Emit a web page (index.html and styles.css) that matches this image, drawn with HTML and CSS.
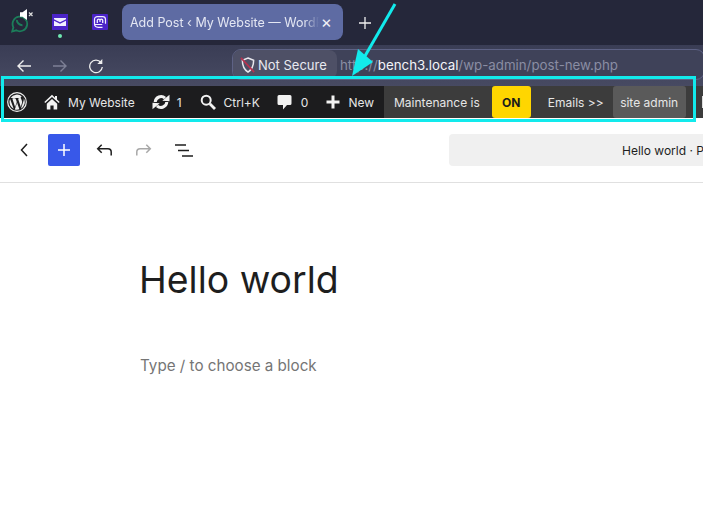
FILE: index.html
```
<!DOCTYPE html>
<html lang="en">
<head>
<meta charset="utf-8">
<title>Add Post</title>
<link rel="stylesheet" href="styles.css">
</head>
<body>
<header class="tabs">
  <div class="pin pin-wa">
    <svg width="18" height="20" viewBox="0 0 18 20" fill="none" stroke="#1c7d5a" stroke-width="1.800"><path d="M1.200 18.500l1.200-4.200A7.300 7.300 0 1 1 5.300 17.300z"/><path d="M6 7c-.5 2.300 2.500 5.300 5.500 5.200" stroke-width="2"/></svg>
    <svg class="mute" width="13" height="11" viewBox="0 0 13 11"><path fill="#fff" d="M0 3.200h2.500L7 0v11L2.500 7.800H0z"/><path stroke="#ddd" stroke-width="1.200" d="M9 3.500l3.500 3.500M12.500 3.500L9 7"/></svg>
  </div>
  <div class="pin pin-mail">
    <svg width="16" height="16" viewBox="0 0 16 16"><rect width="16" height="16" fill="#4b24c8"/><path fill="#f2f0ff" d="M2 4h12v1.200L8 8.300 2 5.200zM2 6.700l6 3 6-3V12H2z"/></svg>
    <span class="dot"></span>
  </div>
  <div class="pin pin-masto">
    <svg width="16" height="16" viewBox="0 0 16 16"><rect width="16" height="16" rx="1" fill="#4b24c8"/><path fill="none" stroke="#f2f0ff" stroke-width="1.200" d="M13.500 9.800V5.500C13.500 3.500 12.300 2.700 10.500 2.700H5.500C3.700 2.700 2.500 3.500 2.500 5.500v4c0 2.400 1.500 3.800 3.800 3.800h4.200M2.800 10.500h7.500"/><path fill="none" stroke="#f2f0ff" stroke-width="1.300" d="M5.300 9V6.200C5.300 4.800 8 4.800 8 6.200V8M8 8V6.200C8 4.800 10.700 4.800 10.700 6.200V9"/></svg>
  </div>
  <div class="tab">
    <span class="tab-title">Add Post ‹ My Website — WordPress</span>
    <span class="tab-close">×</span>
  </div>
  <svg class="new-tab" width="14" height="14" viewBox="0 0 14 14"><path stroke="#f0f0f0" stroke-width="1.300" d="M7 1v12M1 7h12"/></svg>
</header>

<nav class="nav">
  <svg class="nav-btn" width="16" height="14" viewBox="0 0 16 14" fill="none" stroke="#eee" stroke-width="1.400"><path d="M15 7H2M7.500 1.500L2 7l5.500 5.500"/></svg>
  <svg class="nav-btn" width="16" height="14" viewBox="0 0 16 14" fill="none" stroke="#7d8096" stroke-width="1.400"><path d="M1 7h13M8.500 1.500L14 7l-5.500 5.500"/></svg>
  <svg class="nav-btn" width="16" height="16" viewBox="0 0 16 16" fill="none" stroke="#eee" stroke-width="1.300"><path d="M13 4.500A6.300 6.300 0 1 0 14.300 9"/><path fill="#eee" stroke="none" d="M14.300 1v5H9.300z"/></svg>
  <div class="url">
    <div class="secure">
      <svg width="16" height="18" viewBox="0 0 17 18"><path fill="none" stroke="#e8e8ee" stroke-width="1.600" d="M8.500 1.500l6 2.500c0 5-1 9.500-6 12.500-5-3-6-7.500-6-12.500z"/><path stroke="#b8324f" stroke-width="1.800" d="M1 1.500l14 15"/></svg>
      <span>Not Secure</span>
    </div>
    <span class="scheme">http://</span><span class="host">bench3.local</span><span class="scheme">/wp-admin/post-new.php</span>
  </div>
</nav>

<div class="adminbar">
  <div class="bar-dark">
    <svg class="wp" width="20" height="20" viewBox="0 0 20 20"><circle cx="10" cy="10" r="9.300" fill="none" stroke="#eee" stroke-width="1.200"/><path fill="#eee" d="M2.500 10c0 3 1.700 5.500 4.200 6.800L3.100 7A7.500 7.500 0 0 0 2.500 10zM15 9.600c0-.9-.3-1.600-.6-2.100-.4-.6-.7-1.100-.7-1.700 0-.7.500-1.300 1.200-1.300A7.500 7.500 0 0 0 3.600 6h.5c.8 0 2-.1 2-.1.400 0 .5.600.1.600 0 0-.4.100-.9.100l2.800 8.400 1.700-5.100-1.200-3.300c-.4 0-.8-.1-.8-.1-.4 0-.4-.6 0-.6 0 0 1.300.1 2 .1.800 0 2-.1 2-.1.400 0 .5.600.1.600 0 0-.4.100-.9.100l2.800 8.300.8-2.600c.3-1.100.6-1.900.6-2.600zM10.100 10.700l-2.300 6.700a7.500 7.500 0 0 0 4.600-.1zM16.700 6.300c0 .3.100.6.100.9 0 .8-.1 1.600-.6 2.800l-2.300 6.700A7.500 7.500 0 0 0 16.700 6.300z"/></svg>
    <div class="item item-home">
      <svg width="16" height="16" viewBox="0 0 16 16"><path fill="#f2f2f2" d="M8 .8L.3 8l1 1.100L8 3l6.700 6.100 1-1.100L13 5.500V2h-2v1.700zM2.800 9.800L8 5l5.200 4.800V15.500H9.600v-4H6.400v4H2.800z"/></svg>
      <span>My Website</span>
    </div>
    <div class="item item-upd">
      <svg width="18" height="16" viewBox="0 0 18 16"><path fill="none" stroke="#f2f2f2" stroke-width="3" d="M3.200 8a5.800 5.800 0 0 1 9.800-3.800M14.800 8A5.800 5.800 0 0 1 5 11.800"/><path fill="#f2f2f2" d="M10.300 6.800L17.500 7.200V.8zM7.700 9.200L.5 8.800v6.400z"/></svg>
      <span>1</span>
    </div>
    <div class="item item-search">
      <svg width="16" height="16" viewBox="0 0 16 16" fill="none" stroke="#f2f2f2"><circle cx="6.200" cy="6.200" r="4.500" stroke-width="2"/><path stroke-width="2.800" d="M9.800 9.800L15 15"/></svg>
      <span>Ctrl+K</span>
    </div>
    <div class="item item-com">
      <svg width="15" height="16" viewBox="0 0 15 16"><path fill="#f2f2f2" d="M2 1h11a1.500 1.500 0 0 1 1.500 1.500v7A1.500 1.500 0 0 1 13 11H10l-4 4.500V11H2A1.500 1.500 0 0 1 .5 9.500v-7A1.500 1.500 0 0 1 2 1z"/></svg>
      <span>0</span>
    </div>
    <div class="item item-new">
      <svg width="14" height="14" viewBox="0 0 14 14"><path stroke="#f2f2f2" stroke-width="3" d="M7 .5v13M.5 7h13"/></svg>
      <span>New</span>
    </div>
  </div>
  <div class="bar-mid">
    <span class="maint">Maintenance is</span>
    <span class="on">ON</span>
    <span class="emails">Emails &gt;&gt;</span>
    <span class="role">site admin</span>
    <span class="edge"></span>
  </div>
</div>

<div class="toolbar">
  <div class="tools">
    <svg class="back" width="8" height="14" viewBox="0 0 8 14" fill="none" stroke="#1e1e1e" stroke-width="1.500"><path d="M7 1L1.500 7 7 13"/></svg>
    <button class="add" type="button"><svg width="12" height="12" viewBox="0 0 12 12"><path stroke="#fff" stroke-width="1.500" d="M6 0v12M0 6h12"/></svg></button>
    <svg class="undo" width="16" height="12" viewBox="0 0 16 12" fill="none" stroke="#1e1e1e" stroke-width="1.500"><path d="M15.200 11.500V8c0-2-1.300-3.300-3.300-3.300H1.500M5.700.700l-4 4 4 4"/></svg>
    <svg class="redo" width="16" height="12" viewBox="0 0 16 12" fill="none" stroke="#a8a8a8" stroke-width="1.500"><path d="M.8 11.500V8c0-2 1.300-3.300 3.300-3.300h10.400M10.300.700l4 4-4 4"/></svg>
    <svg class="list" width="18" height="13" viewBox="0 0 18 13" stroke="#1e1e1e" stroke-width="1.500"><path d="M0 1h11M3 6.500h11M7 12h11"/></svg>
  </div>
  <div class="doc"><span class="doc-title">Hello world · Post</span></div>
</div>

<main class="canvas">
  <h1 class="title">Hello world</h1>
  <p class="hint">Type / to choose a block</p>
</main>

<div class="frame"></div>
<svg class="arrow" width="50" height="76" viewBox="0 0 50 76"><path stroke="#12eaec" stroke-width="3" d="M45 2L15 54"/><path fill="#12eaec" d="M2 74L8 47l15 13z"/></svg>
</body>
</html>
```
FILE: styles.css
```
* { box-sizing: border-box; }
html, body { margin: 0; height: 100%; }
body {
  position: relative;
  width: 703px;
  height: 519px;
  overflow: hidden;
  background: #fff;
  font-family: Inter, "Liberation Sans", sans-serif;
}
.tabs {
  height: 45px;
  background: #25273a;
  display: flex;
  align-items: flex-start;
  position: relative;
}
.pin { position: relative; flex: none; }
.pin-wa { margin: 13px 0 0 11px; width: 23px; height: 20px; }
.mute { position: absolute; left: 9px; top: -4px; }
.pin-mail { margin: 14px 0 0 18px; width: 16px; height: 16px; }
.pin-masto { margin: 14px 0 0 24px; width: 16px; height: 16px; }
.pin svg { display: block; }
.dot {
  position: absolute;
  left: 6px;
  top: 20px;
  width: 4px;
  height: 4px;
  border-radius: 50%;
  background: #6fe8b0;
}
.tab {
  margin: 4px 0 0 14px;
  width: 221px;
  height: 36px;
  flex: none;
  display: flex;
  align-items: center;
  padding: 0 11px 0 8px;
  border-radius: 8px;
  background: #5e6ba3;
  color: #e4e7f3;
  font-size: 12.500px;
}
.tab-title {
  flex: 1;
  min-width: 0;
  white-space: nowrap;
  overflow: hidden;
  -webkit-mask-image: linear-gradient(to right, #000 92%, transparent 100%);
  mask-image: linear-gradient(to right, #000 92%, transparent 100%);
}
.tab-close { margin-left: 2px; font-size: 17px; color: #f0f0f5; line-height: 1; }
.new-tab { margin: 16px 0 0 15px; flex: none; }

.nav {
  height: 41px;
  background: linear-gradient(#3a3d55, #474a62);
  display: flex;
  align-items: center;
  padding-left: 16px;
  position: relative;
}
.nav-btn { flex: none; margin-right: 20px; }
.nav-btn:nth-child(3) { margin-right: 0; }
.url {
  position: absolute;
  left: 232px;
  top: 4px;
  right: -2px;
  height: 31px;
  border: 1px solid #5e6285;
  border-radius: 9px;
  display: flex;
  align-items: center;
  font-size: 13.300px;
  background: #3f4259;
  white-space: nowrap;
}
.secure {
  height: 29px;
  width: 104px;
  flex: none;
  display: flex;
  align-items: center;
  gap: 2px;
  padding-left: 7px;
  margin-right: 3px;
  background: #4e5066;
  border-radius: 8px;
  color: #e8e9f0;
  font-size: 13px;
}
.scheme { color: #8a8da3; }
.host { color: #f4f4f8; }

.adminbar {
  height: 32px;
  display: flex;
  color: #e6e6e6;
  font-size: 12px;
  background: #3c3c3c;
  white-space: nowrap;
}
.bar-dark {
  width: 384px;
  flex: none;
  background: #1c1c1e;
  display: flex;
  align-items: center;
  padding-left: 7px;
}
.wp { flex: none; }
.item { display: flex; align-items: center; flex: none; }
.item-home { margin-left: 17px; gap: 8px; }
.item-upd { margin-left: 17px; gap: 7px; }
.item-search { margin-left: 18px; gap: 8px; }
.item-com { margin-left: 17px; gap: 9px; }
.item-new { margin-left: 18px; gap: 8px; }
.bar-mid { flex: 1; display: flex; align-items: stretch; position: relative; }
.maint { align-self: center; margin-left: 10px; }
.on {
  margin-left: 12px;
  width: 39px;
  background: #ffd600;
  color: #1b1b1b;
  border-radius: 3px;
  font-weight: 700;
  display: flex;
  align-items: center;
  justify-content: center;
}
.emails { align-self: center; margin-left: 17px; }
.role {
  margin-left: 9px;
  width: 73px;
  background: #5a5a5a;
  border-radius: 3px;
  display: flex;
  align-items: center;
  justify-content: center;
}
.edge {
  position: absolute;
  right: 0;
  top: 10px;
  width: 1px;
  height: 12px;
  background: #ddd;
}

.toolbar {
  height: 65px;
  border-bottom: 1px solid #e0e0e0;
  display: flex;
  align-items: center;
  position: relative;
}
.tools { display: flex; align-items: center; padding-left: 20px; flex: none; }
.back { flex: none; }
.add {
  margin-left: 20px;
  width: 32px;
  height: 32px;
  border: 0;
  border-radius: 2px;
  padding: 0;
  background: #3858e9;
  display: flex;
  align-items: center;
  justify-content: center;
}
.undo { margin-left: 16px; }
.redo { margin-left: 24px; }
.list { margin-left: 23px; }
.doc {
  position: absolute;
  left: 449px;
  top: 16px;
  width: 400px;
  height: 32px;
  border-radius: 4px;
  background: #f0f0f0;
  color: #1e1e1e;
  font-size: 12px;
  display: flex;
  align-items: center;
  padding-left: 173px;
  white-space: nowrap;
}

.canvas { padding: 75px 0 0 140px; background: #fff; }
.title {
  margin: 0 0 0 -1px;
  font-size: 37.400px;
  font-weight: 400;
  line-height: 44px;
  color: #1e1e1e;
}
.hint {
  margin: 53px 0 0;
  font-size: 15.200px;
  line-height: 22px;
  color: #757575;
}

.frame {
  position: absolute;
  left: 1px;
  top: 76px;
  width: 695px;
  height: 46px;
  border: 3px solid #12eaec;
}
.arrow { position: absolute; left: 350px; top: 2px; }
```
